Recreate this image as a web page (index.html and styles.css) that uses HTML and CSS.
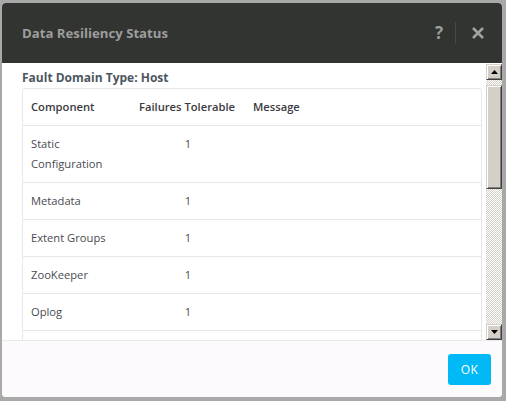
FILE: index.html
```html
<!DOCTYPE html>
<html>
<head>
<meta charset="utf-8">
<link rel="stylesheet" href="styles.css">
</head>
<body>
<div class="backdrop">
  <div class="dialog">
    <header class="dlg-head">
      <h1 class="title">Data Resiliency Status</h1>
      <div class="tools">
        <span class="help">?</span>
        <span class="sep"></span>
        <svg class="close" width="14" height="14" viewBox="0 0 14 14"><path d="M2 2 L12 12 M12 2 L2 12" stroke="#a2a2a2" stroke-width="2.6" fill="none"/></svg>
      </div>
    </header>
    <div class="dlg-main">
      <div class="content">
        <div class="fd">Fault Domain Type: Host</div>
        <div class="table">
          <div class="row head"><div class="c1">Component</div><div class="c2">Failures Tolerable</div><div class="c3">Message</div></div>
          <div class="row"><div class="c1">Static<br>Configuration</div><div class="c2">1</div><div class="c3"></div></div>
          <div class="row"><div class="c1">Metadata</div><div class="c2">1</div><div class="c3"></div></div>
          <div class="row"><div class="c1">Extent Groups</div><div class="c2">1</div><div class="c3"></div></div>
          <div class="row"><div class="c1">ZooKeeper</div><div class="c2">1</div><div class="c3"></div></div>
          <div class="row"><div class="c1">Oplog</div><div class="c2">1</div><div class="c3"></div></div>
          <div class="row empty"></div>
        </div>
      </div>
      <div class="scrollbar">
        <div class="sb-btn"><svg width="7" height="4" viewBox="0 0 7 4"><polygon points="3.5,0 7,4 0,4" fill="#000"/></svg></div>
        <div class="sb-track"><div class="sb-thumb"></div></div>
        <div class="sb-btn"><svg width="7" height="4" viewBox="0 0 7 4"><polygon points="0,0 7,0 3.5,4" fill="#000"/></svg></div>
      </div>
    </div>
    <footer class="dlg-foot">
      <button class="ok">OK</button>
    </footer>
  </div>
</div>
</body>
</html>
```
FILE: styles.css
```css
html, body {
  margin: 0;
  padding: 0;
}
body {
  background: #a9a9a9;
  width: 506px;
  height: 401px;
  overflow: hidden;
  font-family: "Open Sans", "Liberation Sans", sans-serif;
}
.backdrop {
  padding: 3px 4px 4px 2px;
}
.dialog {
  width: 500px;
  height: 394px;
  display: flex;
  flex-direction: column;
  border-radius: 4px;
  overflow: hidden;
  background: #fff;
}
.dlg-head {
  height: 60px;
  flex: none;
  background: #323432;
  display: flex;
  align-items: center;
  justify-content: space-between;
  padding: 0 17px 0 20px;
}
.title {
  margin: 0;
  font-size: 13.2px;
  font-weight: 700;
  color: #9d9d9d;
}
.tools {
  display: flex;
  align-items: center;
}
.help {
  font-size: 17px;
  font-weight: 700;
  color: #9d9d9d;
  line-height: 20px;
  margin-right: 12px;
}
.sep {
  width: 1px;
  height: 22px;
  background: #474947;
  margin-right: 15px;
}
.close {
  display: block;
}
.dlg-main {
  height: 277px;
  flex: none;
  display: flex;
}
.content {
  flex: 1;
  overflow: hidden;
  padding: 0 4px 0 20px;
}
.fd {
  font-size: 12px;
  font-weight: 700;
  color: #4d5660;
  line-height: 14px;
  margin-top: 8px;
  margin-bottom: 3px;
}
.table {
  border: 1px solid #e8e8e8;
  border-radius: 3px;
}
.row {
  display: grid;
  grid-template-columns: 108px 114px 1fr;
  border-bottom: 1px solid #e8e8e8;
  font-size: 11.2px;
  line-height: 20px;
  color: #4a4a52;
}
.row > div {
  padding: 8px 8px;
}
.row.empty {
  height: 36px;
}
.row .c2 {
  text-align: center;
}
.row.head {
  font-weight: 600;
  color: #3a3a40;
}
.row.head .c2 {
  text-align: left;
}
.scrollbar {
  width: 16px;
  flex: none;
  display: flex;
  flex-direction: column;
  padding-top: 1px;
}
.sb-btn {
  height: 16px;
  flex: none;
  box-sizing: border-box;
  background: #d4d0c8;
  border: 1px solid;
  border-color: #d4d0c8 #404040 #404040 #d4d0c8;
  box-shadow: inset 1px 1px #fff, inset -1px -1px #808080;
  display: flex;
  align-items: center;
  justify-content: center;
}
.sb-track {
  flex: 1;
  background: repeating-conic-gradient(#d4d0c8 0 25%, #ffffff 0 50%) 0 0 / 2px 2px;
  display: flex;
  flex-direction: column;
}
.sb-thumb {
  margin-top: 5px;
  height: 104px;
  box-sizing: border-box;
  background: #d4d0c8;
  border: 1px solid;
  border-color: #d4d0c8 #404040 #404040 #d4d0c8;
  box-shadow: inset 1px 1px #fff, inset -1px -1px #808080;
}
.dlg-foot {
  flex: 1;
  background: #fdfafd;
  border-top: 1px solid #ebe8eb;
  display: flex;
  align-items: center;
  justify-content: flex-end;
  padding-right: 11px;
}
.ok {
  width: 43px;
  height: 31px;
  border: none;
  border-radius: 3px;
  background: #00b9f6;
  color: #fff;
  font-family: "Open Sans", "Liberation Sans", sans-serif;
  font-size: 12px;
  letter-spacing: 0.5px;
  padding: 0;
  margin-top: 1px;
}
```
